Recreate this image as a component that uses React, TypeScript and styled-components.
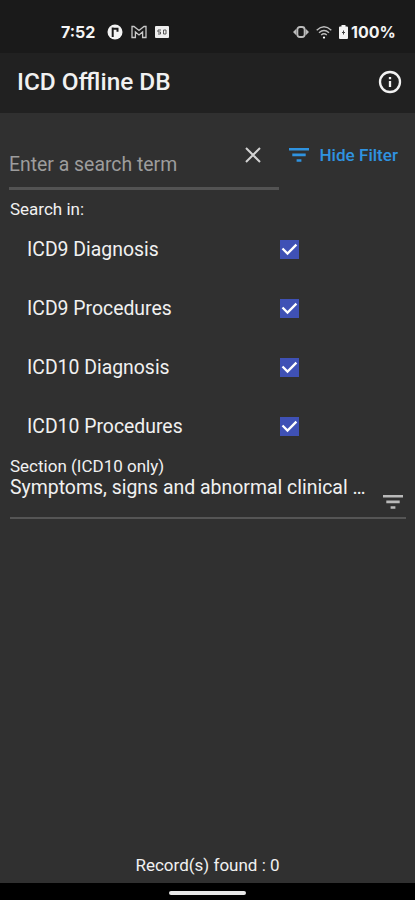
import React, { useState } from 'react';
import styled, { createGlobalStyle } from 'styled-components';

const GlobalStyle = createGlobalStyle`
  * { box-sizing: border-box; }
  body { margin: 0; background: #303030; font-family: Roboto, sans-serif; color: #f1f1f1; }
  button, input { font: inherit; color: inherit; background: none; border: 0; padding: 0; }
  svg { display: block; }
`;

const Screen = styled.div`
  width: 415px;
  height: 900px;
  display: flex;
  flex-direction: column;
  background: #303030;
  overflow: hidden;
`;

const StatusBar = styled.div`
  height: 53px;
  flex: none;
  display: flex;
  justify-content: space-between;
  align-items: center;
  padding: 11px 19px 0 61px;
  background: #1a1a1a;
`;

const StatusGroup = styled.div<{ $gap: number }>`
  display: flex;
  align-items: center;
  gap: ${(p) => p.$gap}px;
`;

const StatusText = styled.span<{ $width: number }>`
  width: ${(p) => p.$width}px;
  font: 700 16px/20px Inter, sans-serif;
  letter-spacing: 0;
  white-space: nowrap;
  color: #f4f4f4;
`;

const AppBar = styled.header`
  height: 60px;
  flex: none;
  display: flex;
  align-items: center;
  justify-content: space-between;
  padding: 0 13px 2px 17px;
  background: #212121;
`;

const Title = styled.h1`
  margin: 0;
  font-size: 24.4px;
  line-height: 30px;
  font-weight: 500;
  white-space: nowrap;
`;

const IconButton = styled.button`
  display: flex;
  flex: none;
`;

const Content = styled.main`
  flex: 1;
  display: flex;
  flex-direction: column;
`;

const SearchRow = styled.div`
  height: 77px;
  display: flex;
  padding: 0 17px 0 9px;
  justify-content: space-between;
`;

const SearchField = styled.div`
  width: 270px;
  display: flex;
  padding: 30px 18px 0 0;
  border-bottom: 3px solid #535353;
`;

const SearchInput = styled.input`
  flex: 1;
  min-width: 0;
  height: 42px;
  font-size: 19.4px;
  outline: none;
  &::placeholder { color: #9d9d9d; opacity: 1; }
`;

const ClearButton = styled(IconButton)`
  align-self: flex-start;
  margin-top: 4px;
`;

const FilterButton = styled.button`
  height: 24px;
  margin-top: 30px;
  display: flex;
  align-items: center;
  gap: 10px;
  color: #2f93e0;
  font-size: 17.1px;
  font-weight: 500;
  white-space: nowrap;
`;

const SmallLabel = styled.div`
  height: 22px;
  padding-left: 10px;
  font-size: 17px;
  line-height: 22px;
`;

const OptionsHeading = styled(SmallLabel)`
  margin-top: 8px;
`;

const OptionList = styled.div`
  margin-top: -1px;
  display: flex;
  flex-direction: column;
`;

const Option = styled.label`
  height: 59.2px;
  display: grid;
  grid-template-columns: 252.5px 20px;
  align-items: center;
  padding-left: 27px;
  padding-top: 1px;
  font-size: 19.4px;
`;

const CheckBox = styled.button`
  width: 19px;
  height: 19px;
  background: #3f51b5;
`;

const SectionHeading = styled(SmallLabel)`
  margin-top: -1px;
`;

const SectionField = styled.div`
  height: 42px;
  margin: 0 9px 0 10px;
  display: flex;
  justify-content: space-between;
  border-bottom: 2px solid #555;
`;

const SectionValue = styled.span`
  width: 357px;
  font-size: 19.45px;
  line-height: 22px;
  white-space: nowrap;
`;

const SectionIcon = styled.div`
  margin: 18px 3px 0 0;
`;

const Footer = styled.footer`
  margin-top: auto;
  height: 36px;
  text-align: center;
  font-size: 17px;
  line-height: 36px;
`;

const NavBar = styled.div`
  height: 17px;
  flex: none;
  display: flex;
  justify-content: center;
  padding-top: 8px;
  background: #000;
`;

const NavHandle = styled.div`
  width: 77px;
  height: 4px;
  border-radius: 2px;
  background: #e8e8e8;
`;

const FilterIcon = ({ color }: { color: string }) => (
  <svg width="20" height="14" viewBox="0 0 20 14" fill={color}>
    <path d="M0 0h20v2.6H0zM3.3 5.6h13.4v2.6H3.3zM7.6 11.2h4.8v2.6H7.6z" />
  </svg>
);

const names = ['ICD9 Diagnosis', 'ICD9 Procedures', 'ICD10 Diagnosis', 'ICD10 Procedures'];

export default function App() {
  const [checked, setChecked] = useState(names.map(() => true));
  const [term, setTerm] = useState('');
  return (
    <Screen>
      <GlobalStyle />
      <StatusBar>
        <StatusGroup $gap={8}>
          <StatusText $width={38}>7:52</StatusText>
          <svg width="16" height="16" viewBox="0 0 16 16">
            <circle cx="8" cy="8" r="7.5" fill="#f4f4f4" />
            <path d="M5.7 3.5v9.5M5.7 4.7h4.8v3" fill="none" stroke="#1a1a1a" strokeWidth="2" />
          </svg>
          <svg width="16" height="14" viewBox="0 0 16 14" fill="none" stroke="#c9c9c9" strokeWidth="1.3">
            <path d="M1 12.5V1.5h2l5 4 5-4h2v11h-3.4V7L8 10 4.4 7v5.5z" />
          </svg>
          <svg width="14" height="12" viewBox="0 0 14 12">
            <rect width="14" height="12" rx="1" fill="#eee" />
            <path d="M6 4H3v2h2.5v2H3M8.5 4h2.5v4H8.5z" fill="none" stroke="#555" />
          </svg>
        </StatusGroup>
        <StatusGroup $gap={7}>
          <svg width="16" height="12" viewBox="0 0 16 12">
            <path d="M3.5 2.5v7L0 6zM12.5 2.5v7L16 6z" fill="#bbb" />
            <rect x="4.4" y="1" width="7.2" height="10" rx="2.5" fill="none" stroke="#bbb" strokeWidth="1.8" />
          </svg>
          <svg width="16" height="13" viewBox="0 0 16 13" fill="none" stroke="#bdbdbd" strokeWidth="1.4">
            <path d="M.7 4.2Q8-2.5 15.3 4.2M3 6.7q5-4.5 10 0M5.2 9q2.8-2.4 5.6 0" />
            <circle cx="8" cy="11.6" r="1.1" fill="#fff" stroke="none" />
          </svg>
          <StatusGroup $gap={3}>
            <svg width="9" height="14" viewBox="0 0 9 14">
              <path d="M2.5 0h4v1.5H8q1 0 1 1V13q0 1-1 1H1q-1 0-1-1V2.5q0-1 1-1h1.5z" fill="#f4f4f4" />
              <path d="M4.5 5.5v4M3 7.5h3" stroke="#444" />
            </svg>
            <StatusText $width={45}>100%</StatusText>
          </StatusGroup>
        </StatusGroup>
      </StatusBar>
      <AppBar>
        <Title>ICD Offline DB</Title>
        <IconButton aria-label="Information">
          <svg width="24" height="24" viewBox="0 0 24 24" fill="none" stroke="#f2f2f2">
            <circle cx="12" cy="12" r="10" strokeWidth="2.3" />
            <path d="M12 11v6M12 7v2.2" strokeWidth="2.3" />
          </svg>
        </IconButton>
      </AppBar>
      <Content>
        <SearchRow>
          <SearchField>
            <SearchInput placeholder="Enter a search term" value={term} onChange={(e) => setTerm(e.target.value)} />
            <ClearButton aria-label="Clear" onClick={() => setTerm('')}>
              <svg width="16" height="16" viewBox="0 0 16 16" stroke="#d2d2d2" strokeWidth="2">
                <path d="M1 1l14 14M15 1L1 15" />
              </svg>
            </ClearButton>
          </SearchField>
          <FilterButton>
            <FilterIcon color="#2f93e0" />
            Hide Filter
          </FilterButton>
        </SearchRow>
        <OptionsHeading>Search in:</OptionsHeading>
        <OptionList>
          {names.map((name, i) => (
            <Option key={name}>
              <span>{name}</span>
              <CheckBox
                role="checkbox"
                aria-checked={checked[i]}
                onClick={() => setChecked(checked.map((c, j) => (j === i ? !c : c)))}
              >
                {checked[i] && (
                  <svg width="19" height="19" viewBox="0 0 19 19" fill="none" stroke="#fff" strokeWidth="2.3">
                    <path d="M2.5 8.5l5 5L16.4 4.6" />
                  </svg>
                )}
              </CheckBox>
            </Option>
          ))}
        </OptionList>
        <SectionHeading>Section (ICD10 only)</SectionHeading>
        <SectionField>
          <SectionValue>Symptoms, signs and abnormal clinical …</SectionValue>
          <SectionIcon>
            <FilterIcon color="#b9b9b9" />
          </SectionIcon>
        </SectionField>
        <Footer>Record(s) found : 0</Footer>
      </Content>
      <NavBar>
        <NavHandle />
      </NavBar>
    </Screen>
  );
}
